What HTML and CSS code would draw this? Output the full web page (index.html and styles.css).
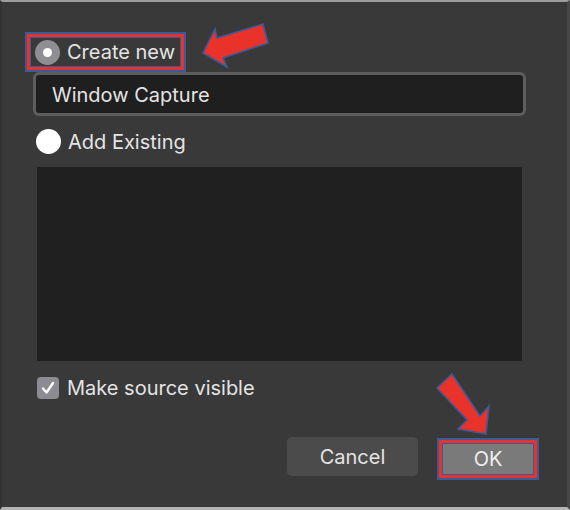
FILE: index.html
```html
<!DOCTYPE html>
<html>
<head>
<meta charset="utf-8">
<link rel="stylesheet" href="styles.css">
</head>
<body>
<div class="dialog">
  <div class="hl hl-create">
    <div class="hl-red">
      <div class="hl-core row">
        <span class="radio radio-on"><span class="dot"></span></span>
        <span class="label">Create new</span>
      </div>
    </div>
  </div>
  <div class="field"><span class="field-text">Window Capture</span></div>
  <div class="row row-existing">
    <span class="radio radio-off"></span>
    <span class="label">Add Existing</span>
  </div>
  <div class="list"></div>
  <div class="row row-check">
    <span class="check">
      <svg width="22" height="22" viewBox="0 0 22 22"><path d="M6 11.5 L9.5 15.5 L16 6" fill="none" stroke="#ffffff" stroke-width="2.4" stroke-linecap="round" stroke-linejoin="round"/></svg>
    </span>
    <span class="label">Make source visible</span>
  </div>
  <div class="buttons">
    <div class="btn btn-cancel">Cancel</div>
    <div class="hl hl-ok">
      <div class="hl-red">
        <div class="hl-core btn-ok">OK</div>
      </div>
    </div>
  </div>

  <svg class="arrow arrow-left" width="570" height="510" viewBox="0 0 570 510">
    <polygon points="203,53 215,29 217,38 263,24 268,43 223,58 227,67" fill="#e8322a" stroke="#3b5a9a" stroke-width="1.6" stroke-linejoin="miter"/>
    <polygon points="452,374 480,416 489,406 486,434 458,429 467,420 437,388" fill="#e8322a" stroke="#3b5a9a" stroke-width="1.6" stroke-linejoin="miter"/>
  </svg>
</div>
</body>
</html>
```

FILE: styles.css
```css
html, body {
  margin: 0;
  padding: 0;
  background: #393939;
}

.dialog {
  position: relative;
  width: 570px;
  height: 510px;
  box-sizing: border-box;
  background: #393939;
  border-top: 2px solid #9c9c9c;
  border-bottom: 3px solid #b4b4b4;
  border-right: 3px solid #474747;
  border-left: 2px solid #333333;
  display: flex;
  flex-direction: column;
  align-items: flex-start;
  font-family: Inter, "Liberation Sans", Arial, sans-serif;
  font-size: 20px;
  color: #e4e4e4;
  overflow: hidden;
}

.row {
  display: flex;
  align-items: center;
}

.label {
  line-height: 24px;
  white-space: nowrap;
}

/* annotation highlight frames */
.hl {
  border: 2px solid #3b5a9a;
  box-sizing: border-box;
}
.hl-red {
  border: 3px solid #e8322a;
  height: 100%;
  box-sizing: border-box;
}
.hl-core {
  border: 1px solid #3b5a9a;
  height: 100%;
  box-sizing: border-box;
}

.hl-create {
  margin-top: 30px;
  margin-left: 23px;
  width: 161px;
  height: 40px;
}
.hl-create .hl-core {
  padding-left: 4px;
  gap: 7px;
}

.radio {
  width: 25px;
  height: 25px;
  border-radius: 50%;
  flex: none;
  display: flex;
  align-items: center;
  justify-content: center;
}
.radio-on {
  background: #8f8e93;
}
.dot {
  width: 9px;
  height: 9px;
  border-radius: 50%;
  background: #ffffff;
}
.radio-off {
  background: #ffffff;
}

.field {
  margin-left: 31px;
  width: 493px;
  height: 44px;
  box-sizing: border-box;
  border: 3px solid #5e5e5e;
  border-radius: 6px;
  background: #1f1f1f;
  display: flex;
  align-items: center;
  padding-left: 16px;
}
.field-text {
  line-height: 24px;
  margin-top: 1px;
}

.row-existing {
  margin-top: 13px;
  margin-left: 34px;
  gap: 7px;
  height: 25px;
}

.list {
  margin-top: 13px;
  margin-left: 35px;
  width: 485px;
  height: 194px;
  background: #202020;
}

.row-check {
  margin-top: 16px;
  margin-left: 35px;
  height: 22px;
  gap: 8px;
}
.check {
  width: 22px;
  height: 22px;
  border-radius: 4px;
  background: #8d8c92;
  flex: none;
  display: block;
}
.check svg {
  display: block;
}

.buttons {
  margin-top: 38px;
  margin-left: 285px;
  display: flex;
  align-items: flex-start;
  gap: 19px;
}

.btn {
  display: flex;
  align-items: center;
  justify-content: center;
}
.btn-cancel {
  width: 131px;
  height: 39px;
  border-radius: 5px;
  background: #4b4b4b;
  color: #e4e4e4;
}

.hl-ok {
  width: 102px;
  height: 42px;
  margin-top: 1px;
}
.btn-ok {
  background: #7a7a7a;
  display: flex;
  align-items: center;
  justify-content: center;
  color: #efefef;
}

.arrow {
  position: absolute;
  left: -2px;
  top: -2px;
  pointer-events: none;
}
```
